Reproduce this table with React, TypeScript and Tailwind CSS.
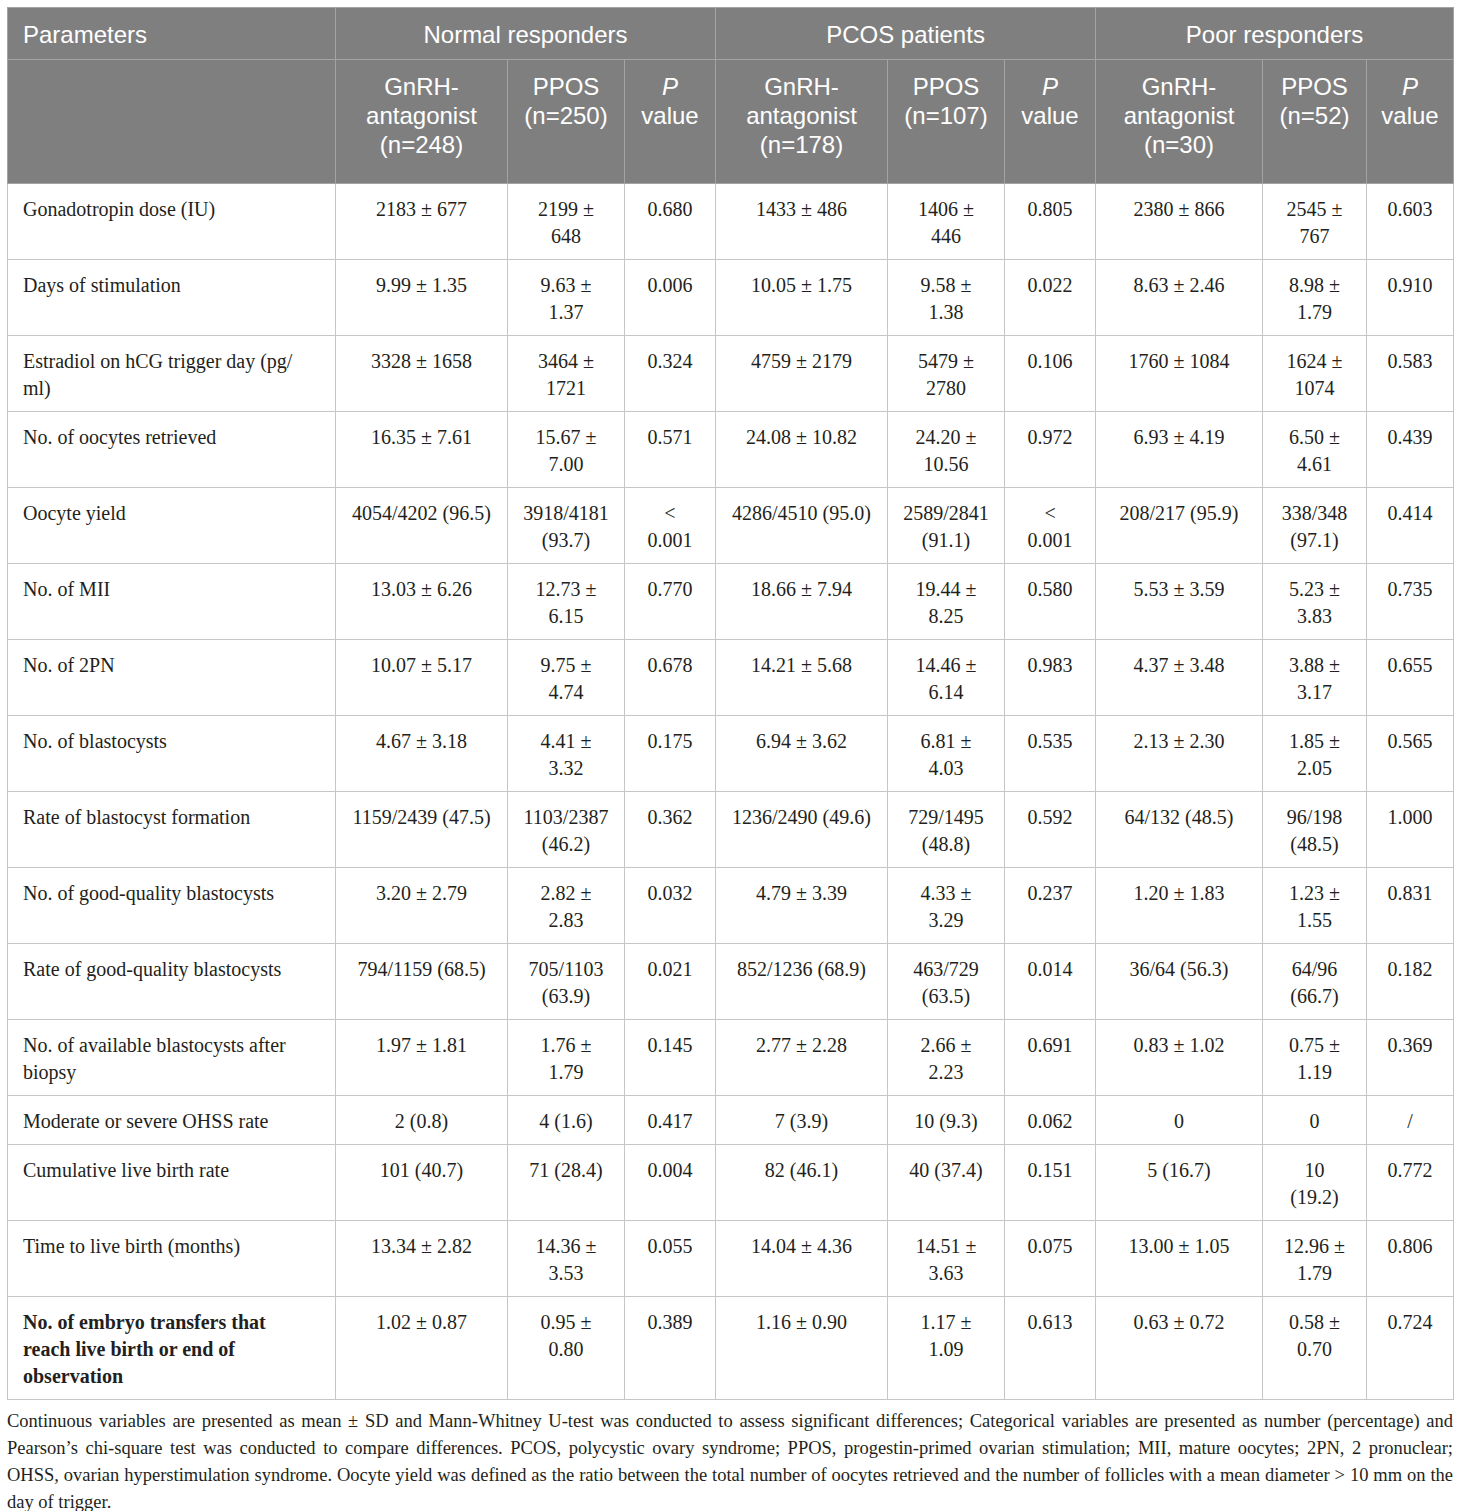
import React from "react";

type Row = { label: React.ReactNode; cells: string[]; bold?: boolean };

const rows: Row[] = [
  { label: "Gonadotropin dose (IU)", cells: ["2183 ± 677", "2199 ± 648", "0.680", "1433 ± 486", "1406 ± 446", "0.805", "2380 ± 866", "2545 ± 767", "0.603"] },
  { label: "Days of stimulation", cells: ["9.99 ± 1.35", "9.63 ± 1.37", "0.006", "10.05 ± 1.75", "9.58 ± 1.38", "0.022", "8.63 ± 2.46", "8.98 ± 1.79", "0.910"] },
  { label: <>Estradiol on hCG trigger day (pg/<br />ml)</>, cells: ["3328 ± 1658", "3464 ± 1721", "0.324", "4759 ± 2179", "5479 ± 2780", "0.106", "1760 ± 1084", "1624 ± 1074", "0.583"] },
  { label: "No. of oocytes retrieved", cells: ["16.35 ± 7.61", "15.67 ± 7.00", "0.571", "24.08 ± 10.82", "24.20 ± 10.56", "0.972", "6.93 ± 4.19", "6.50 ± 4.61", "0.439"] },
  { label: "Oocyte yield", cells: ["4054/4202 (96.5)", "3918/4181 (93.7)", "< 0.001", "4286/4510 (95.0)", "2589/2841 (91.1)", "< 0.001", "208/217 (95.9)", "338/348 (97.1)", "0.414"] },
  { label: "No. of MII", cells: ["13.03 ± 6.26", "12.73 ± 6.15", "0.770", "18.66 ± 7.94", "19.44 ± 8.25", "0.580", "5.53 ± 3.59", "5.23 ± 3.83", "0.735"] },
  { label: "No. of 2PN", cells: ["10.07 ± 5.17", "9.75 ± 4.74", "0.678", "14.21 ± 5.68", "14.46 ± 6.14", "0.983", "4.37 ± 3.48", "3.88 ± 3.17", "0.655"] },
  { label: "No. of blastocysts", cells: ["4.67 ± 3.18", "4.41 ± 3.32", "0.175", "6.94 ± 3.62", "6.81 ± 4.03", "0.535", "2.13 ± 2.30", "1.85 ± 2.05", "0.565"] },
  { label: "Rate of blastocyst formation", cells: ["1159/2439 (47.5)", "1103/2387 (46.2)", "0.362", "1236/2490 (49.6)", "729/1495 (48.8)", "0.592", "64/132 (48.5)", "96/198 (48.5)", "1.000"] },
  { label: "No. of good-quality blastocysts", cells: ["3.20 ± 2.79", "2.82 ± 2.83", "0.032", "4.79 ± 3.39", "4.33 ± 3.29", "0.237", "1.20 ± 1.83", "1.23 ± 1.55", "0.831"] },
  { label: "Rate of good-quality blastocysts", cells: ["794/1159 (68.5)", "705/1103 (63.9)", "0.021", "852/1236 (68.9)", "463/729 (63.5)", "0.014", "36/64 (56.3)", "64/96 (66.7)", "0.182"] },
  { label: "No. of available blastocysts after biopsy", cells: ["1.97 ± 1.81", "1.76 ± 1.79", "0.145", "2.77 ± 2.28", "2.66 ± 2.23", "0.691", "0.83 ± 1.02", "0.75 ± 1.19", "0.369"] },
  { label: "Moderate or severe OHSS rate", cells: ["2 (0.8)", "4 (1.6)", "0.417", "7 (3.9)", "10 (9.3)", "0.062", "0", "0", "/"] },
  { label: "Cumulative live birth rate", cells: ["101 (40.7)", "71 (28.4)", "0.004", "82 (46.1)", "40 (37.4)", "0.151", "5 (16.7)", "10 (19.2)", "0.772"] },
  { label: "Time to live birth (months)", cells: ["13.34 ± 2.82", "14.36 ± 3.53", "0.055", "14.04 ± 4.36", "14.51 ± 3.63", "0.075", "13.00 ± 1.05", "12.96 ± 1.79", "0.806"] },
  {
    label: (
      <>
        No. of embryo transfers that
        <br />
        reach live birth or end of
        <br />
        observation
      </>
    ),
    bold: true,
    cells: ["1.02 ± 0.87", "0.95 ± 0.80", "0.389", "1.16 ± 0.90", "1.17 ± 1.09", "0.613", "0.63 ± 0.72", "0.58 ± 0.70", "0.724"],
  },
];

const widths = [328, 172, 117, 91, 172, 117, 91, 167, 104, 87];

const sans = { fontFamily: '"Liberation Sans", Arial, sans-serif' };
const serif = { fontFamily: '"Liberation Serif", "Times New Roman", serif' };

function Sub({ a, b, c }: { a: string; b?: string; c?: string }) {
  return (
    <>
      {a}
      {b && (
        <>
          <br />
          {b}
        </>
      )}
      {c && (
        <>
          <br />
          {c}
        </>
      )}
    </>
  );
}

function PVal() {
  return (
    <>
      <span className="italic">P</span>
      <br />
      value
    </>
  );
}

export default function App() {
  const hc = "border border-[#a3a3a3] text-white font-normal align-top";
  const subs = [
    <Sub a="GnRH-" b="antagonist" c="(n=248)" />,
    <Sub a="PPOS" b="(n=250)" />,
    <PVal />,
    <Sub a="GnRH-" b="antagonist" c="(n=178)" />,
    <Sub a="PPOS" b="(n=107)" />,
    <PVal />,
    <Sub a="GnRH-" b="antagonist" c="(n=30)" />,
    <Sub a="PPOS" b="(n=52)" />,
    <PVal />,
  ];
  return (
    <div className="bg-white w-[1460px] min-h-[1511px] pt-[7px] pl-[7px] text-[#231f20]">
      <table className="table-fixed border-collapse w-[1446px]" style={sans}>
        <colgroup>
          {widths.map((w, i) => (
            <col key={i} style={{ width: w }} />
          ))}
        </colgroup>
        <thead className="bg-[#7f7f7f] text-[24px] leading-[29px]">
          <tr>
            <th className={`${hc} text-left pl-[15px] pt-[12px] pb-[10px]`}>Parameters</th>
            <th colSpan={3} className={`${hc} text-center pt-[12px] pb-[10px]`}>Normal responders</th>
            <th colSpan={3} className={`${hc} text-center pt-[12px] pb-[10px]`}>PCOS patients</th>
            <th colSpan={3} className={`${hc} text-center pt-[12px] pb-[10px]`}>Poor responders</th>
          </tr>
          <tr>
            <th className={`${hc} pt-[12px] pb-[24px]`}></th>
            {subs.map((s, i) => (
              <th key={i} className={`${hc} text-center px-[4px] pt-[12px] pb-[24px]`}>
                {s}
              </th>
            ))}
          </tr>
        </thead>
        <tbody className="text-[20px] leading-[27px]" style={serif}>
          {rows.map((r, i) => (
            <tr key={i}>
              <td className={`border border-[#c6c6c6] align-top text-left pl-[15px] pr-[10px] pt-[12px] pb-[9px] ${r.bold ? "font-bold" : ""}`}>
                {r.label}
              </td>
              {r.cells.map((c, j) => (
                <td key={j} className="border border-[#c6c6c6] align-top text-center px-[15px] pt-[12px] pb-[9px]">
                  {c}
                </td>
              ))}
            </tr>
          ))}
        </tbody>
      </table>
      <div className="w-[1446px] mt-[8px] text-[18.5px] leading-[27px]" style={serif}>
        <div className="whitespace-nowrap text-justify [text-align-last:justify]">
          Continuous variables are presented as mean ± SD and Mann-Whitney U-test was conducted to assess significant differences; Categorical variables are presented as number (percentage) and
        </div>
        <div className="whitespace-nowrap text-justify [text-align-last:justify]">
          Pearson’s chi-square test was conducted to compare differences. PCOS, polycystic ovary syndrome; PPOS, progestin-primed ovarian stimulation; MII, mature oocytes; 2PN, 2 pronuclear;
        </div>
        <div className="whitespace-nowrap text-justify [text-align-last:justify]">
          OHSS, ovarian hyperstimulation syndrome. Oocyte yield was defined as the ratio between the total number of oocytes retrieved and the number of follicles with a mean diameter &gt; 10 mm on the
        </div>
        <div>day of trigger.</div>
      </div>
    </div>
  );
}
